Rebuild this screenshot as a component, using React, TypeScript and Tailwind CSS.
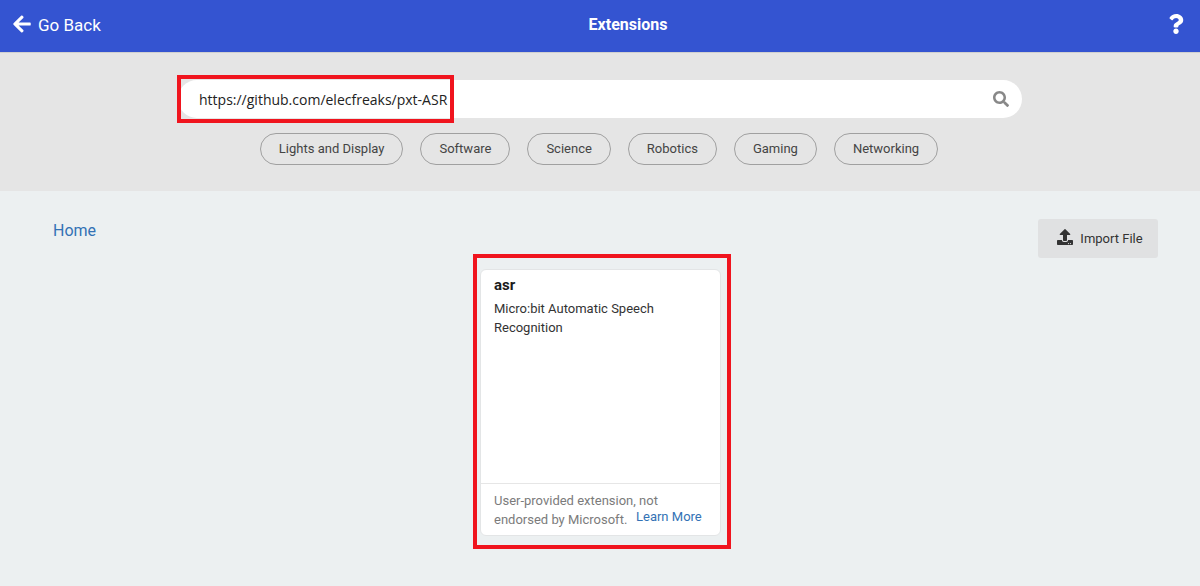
import { useState } from "react";
import { FaArrowLeft, FaQuestion, FaSearch, FaUpload } from "react-icons/fa";

const categories = ["Lights and Display", "Software", "Science", "Robotics", "Gaming", "Networking"];

function Header() {
  return (
    <header className="flex h-[52px] items-center bg-[#3454d1] pb-1 text-white">
      <button type="button" className="flex w-28 items-center gap-1.5 pl-3 text-[17px] leading-6">
        <FaArrowLeft className="size-5" aria-hidden="true" />
        <span className="pt-0.5 whitespace-nowrap">Go Back</span>
      </button>
      <h1 className="flex-1 pt-0.5 text-center text-base leading-6 font-bold">Extensions</h1>
      <button type="button" aria-label="Help" className="flex w-14 justify-end pr-3.5">
        <FaQuestion className="size-5" aria-hidden="true" />
      </button>
    </header>
  );
}

function SearchPanel() {
  const [query, setQuery] = useState("https://github.com/elecfreaks/pxt-ASR");
  return (
    <section className="border-t border-[#d0d0d0] bg-[#e5e5e5] px-4 pt-[27px] pb-[26px]">
      <div className="relative mx-auto max-w-[844px]">
        <div className="flex h-[38px] items-center rounded-full bg-white pr-[13px]">
          <input
            type="text"
            aria-label="Search extensions"
            value={query}
            onChange={(e) => setQuery(e.target.value)}
            className="h-full min-w-0 flex-1 bg-transparent pl-[21px] font-['Open_Sans','Noto_Sans',sans-serif] text-sm text-[#222] outline-none"
          />
          <button type="button" aria-label="Search" className="text-[#888]">
            <FaSearch className="size-4" aria-hidden="true" />
          </button>
        </div>
        <div className="pointer-events-none absolute -top-[5px] -left-px h-12 w-[277px] border-4 border-[#f0141e]" />
      </div>
      <div className="mt-[15px] flex flex-wrap justify-center gap-[17px] pr-0.5">
        {categories.map((name) => (
          <button
            key={name}
            type="button"
            className="h-8 rounded-full border border-[#a0a0a0] px-[18px] text-[13px] leading-5 text-[#444]"
          >
            {name}
          </button>
        ))}
      </div>
    </section>
  );
}

function ExtensionCard() {
  return (
    <div className="mx-auto w-[258px] border-4 border-[#f0141e] pt-[11px] pr-1.5 pb-[9px] pl-[3px]">
      <article className="flex h-[267px] flex-col rounded-md border border-[#e3e5e6] bg-white">
        <div className="flex-1 px-[13px] pt-[5px]">
          <h2 className="text-[15px] leading-5 font-bold text-[#1b1b1b]">asr</h2>
          <p className="mt-1 text-[13px] leading-[19px] text-[#333]">Micro:bit Automatic Speech Recognition</p>
        </div>
        <div className="flex items-center gap-1 border-t border-[#e6e6e6] px-[13px] pt-[7px] pb-1.5 text-[13px] leading-[19px]">
          <p className="w-[138px] whitespace-nowrap text-[#7b7b7b]">
            User-provided extension, not
            <br />
            endorsed by Microsoft.
          </p>
          <a href="#learn-more" className="mt-3 whitespace-nowrap text-[#3372b5]">
            Learn More
          </a>
        </div>
      </article>
    </div>
  );
}

export default function App() {
  return (
    <div className="flex min-h-screen flex-col bg-[#ecf0f1] font-[Roboto,sans-serif]">
      <Header />
      <SearchPanel />
      <main className="flex-1 pb-9">
        <div className="flex items-start justify-between pt-7 pr-[42px] pl-[53px]">
          <a href="#home" className="text-base leading-6 text-[#3372b5]">
            Home
          </a>
          <button
            type="button"
            className="flex h-[39px] w-[120px] items-center justify-center gap-[7px] rounded-[3px] bg-[#e0e1e2] pl-1 text-[13px] text-[#333]"
          >
            <FaUpload className="-mt-1 size-4" aria-hidden="true" />
            Import File
          </button>
        </div>
        <div className="-mt-1 pl-1">
          <ExtensionCard />
        </div>
      </main>
    </div>
  );
}
